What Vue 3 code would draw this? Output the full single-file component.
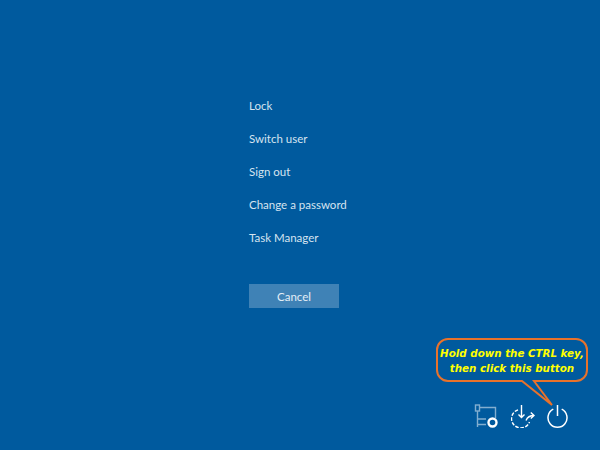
<template>
  <div class="screen">
    <ul class="menu">
      <li v-for="item in items" :key="item">{{ item }}</li>
    </ul>
    <button class="cancel">Cancel</button>

    <div class="tray">
      <!-- network -->
      <svg width="26" height="24" viewBox="0 0 26 24" fill="none">
        <g stroke="#82aed0" stroke-width="1.4">
          <rect x="2.500" y="1" width="4" height="6" />
          <path d="M4.500 7V23M6.500 3.500H22.500V14M4.500 15H13M4.500 20.500H13" />
        </g>
        <circle cx="19.500" cy="18.500" r="4" stroke="#fff" stroke-width="2.400" />
      </svg>
      <!-- update -->
      <svg width="24" height="24" viewBox="0 0 24 24" fill="none" stroke="#fff" stroke-width="1.4">
        <path d="M7 5.800A9.300 9.300 0 1 0 18.500 18" stroke-dasharray="3.600 1.500" />
        <path d="M10.500 1V13.500M7.500 10.500L10.500 13.500L13.500 10.500" />
        <path d="M15 16.500Q17 11.500 23 11.500M19.800 8.500L23 11.500L19.800 14.500" />
      </svg>
      <!-- power -->
      <svg width="22" height="24" viewBox="0 0 22 24" fill="none" stroke="#fff" stroke-width="1.5">
        <path d="M10.500 1V12" />
        <path d="M6.300 5.200A9.500 9.500 0 1 0 14.700 5.200" />
      </svg>
    </div>

    <div class="callout">
      <svg class="bubble" width="154" height="72" viewBox="0 0 154 72" fill="none">
        <path
          d="M13 2H141A11 11 0 0 1 152 13V33A11 11 0 0 1 141 44H99L117 68L87 44H13A11 11 0 0 1 2 33V13A11 11 0 0 1 13 2Z"
          fill="#005a9e" stroke="#e8722b" stroke-width="2"
        />
      </svg>
      <p>Hold down the CTRL key,<br>then click this button</p>
    </div>
  </div>
</template>

<script setup>
const items = ['Lock', 'Switch user', 'Sign out', 'Change a password', 'Task Manager']
</script>

<style>
html, body {
  margin: 0;
  background: #005a9e;
}
</style>

<style scoped>
.screen {
  position: relative;
  width: 600px;
  height: 450px;
  box-sizing: border-box;
  padding: 90px 0 0 249px;
  background: #005a9e;
  font-family: Lato, "Noto Sans", sans-serif;
  color: #d6e4f0;
  overflow: hidden;
}

.menu {
  list-style: none;
  margin: 0;
  padding: 0;
}

.menu li {
  height: 33px;
  line-height: 32px;
  font-size: 11.500px;
}

.cancel {
  display: block;
  width: 90px;
  height: 24px;
  margin-top: 29px;
  padding: 0;
  border: 0;
  background: #3f82b6;
  color: #e4eef6;
  font: 11.500px Lato, "Noto Sans", sans-serif;
}

.tray {
  position: absolute;
  right: 31px;
  bottom: 22px;
  display: flex;
  align-items: center;
  gap: 12px;
}

.callout {
  position: absolute;
  left: 435px;
  top: 337px;
  width: 154px;
  height: 72px;
}

.bubble {
  position: absolute;
  left: 0;
  top: 0;
}

.callout p {
  position: relative;
  margin: 0;
  padding-top: 9px;
  text-align: center;
  font: italic bold 10.3px/14.500px "DejaVu Sans", sans-serif;
  color: #ffff00;
}
</style>
